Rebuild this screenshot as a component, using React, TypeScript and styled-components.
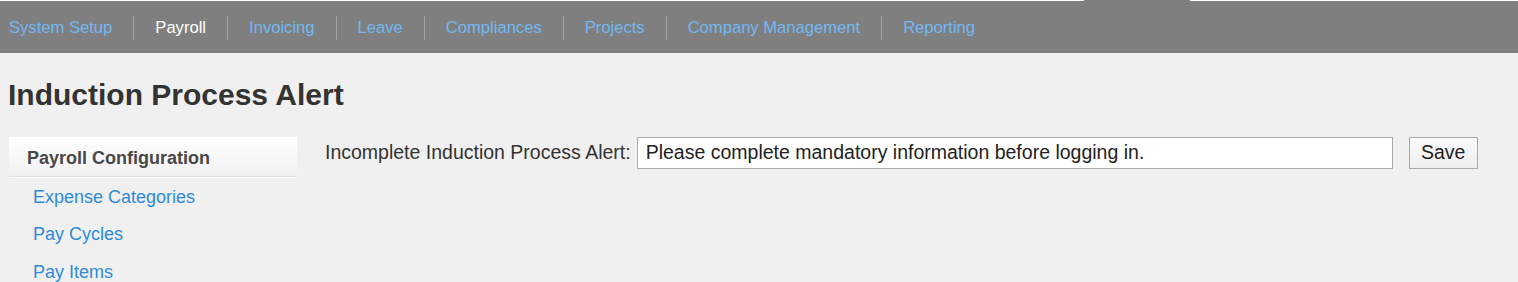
import React from 'react';
import styled, { createGlobalStyle } from 'styled-components';

const GlobalStyle = createGlobalStyle`
  html, body {
    margin: 0;
    padding: 0;
    background: #f0f0f0;
    font-family: "Liberation Sans", Arial, sans-serif;
  }
`;

const TopStrip = styled.div`
  height: 1px;
  background: #ffffff;
  display: flex;
`;

const StripTab = styled.div`
  margin-left: 1084px;
  width: 106px;
  background: #7f7f7f;
`;

const Nav = styled.nav`
  box-sizing: border-box;
  height: 52px;
  padding: 2px 0 0 9px;
  background: #7f7f7f;
  display: flex;
  align-items: center;
`;

const NavLink = styled.a<{ $active?: boolean }>`
  font-size: 16.6px;
  color: ${(p) => (p.$active ? '#ffffff' : '#72b8f4')};
  text-decoration: none;
  cursor: pointer;
  white-space: nowrap;
  &:hover {
    text-decoration: underline;
  }
`;

const Divider = styled.span`
  width: 1px;
  height: 24px;
  margin: 0 21px;
  background: #a3a3a3;
`;

const Page = styled.main`
  padding: 25px 8px 0;
`;

const Title = styled.h1`
  margin: 0 0 24px;
  font-size: 30px;
  font-weight: bold;
  color: #333333;
  line-height: 34.5px;
`;

const Layout = styled.div`
  display: flex;
  align-items: flex-start;
  gap: 28px;
`;

const Sidebar = styled.aside`
  width: 288px;
  margin-left: 1px;
`;

const SideHeading = styled.div`
  padding: 11px 18px 7px;
  line-height: 21px;
  font-size: 18px;
  font-weight: bold;
  color: #484848;
  background: linear-gradient(to bottom, #ffffff, #f1f1f1);
  border-bottom: 1px solid #dedede;
  box-shadow: 0 1px 0 #ffffff;
`;

const SideList = styled.ul`
  list-style: none;
  margin: 2px 0 0;
  padding: 0 0 0 24px;
`;

const SideItem = styled.li`
  line-height: 37.7px;
`;

const SideLink = styled.a`
  font-size: 18px;
  color: #2f8ad8;
  text-decoration: none;
  cursor: pointer;
`;

const FormRow = styled.div`
  display: flex;
  align-items: center;
  font-size: 19.5px;
  color: #333333;
`;

const Label = styled.label`
  margin-right: 6px;
  white-space: nowrap;
`;

const TextInput = styled.input`
  box-sizing: border-box;
  width: 756px;
  height: 32px;
  padding: 0 8px;
  border: 1px solid #a9a9a9;
  background: #ffffff;
  font-family: inherit;
  font-size: 19.5px;
  color: #222222;
  outline: none;
`;

const SaveButton = styled.button`
  box-sizing: border-box;
  margin-left: 16px;
  width: 69px;
  height: 32px;
  padding: 0;
  border: 1px solid #a9a9a9;
  background: linear-gradient(to bottom, #fafafa, #efefef);
  font-family: inherit;
  font-size: 19.5px;
  color: #222222;
  cursor: pointer;
`;

const navItems = [
  'System Setup',
  'Payroll',
  'Invoicing',
  'Leave',
  'Compliances',
  'Projects',
  'Company Management',
  'Reporting',
];

const sideLinks = ['Expense Categories', 'Pay Cycles', 'Pay Items'];

export default function App() {
  return (
    <>
      <GlobalStyle />
      <TopStrip>
        <StripTab />
      </TopStrip>
      <Nav>
        {navItems.map((item, i) => (
          <React.Fragment key={item}>
            {i > 0 && <Divider />}
            <NavLink $active={item === 'Payroll'}>{item}</NavLink>
          </React.Fragment>
        ))}
      </Nav>
      <Page>
        <Title>Induction Process Alert</Title>
        <Layout>
          <Sidebar>
            <SideHeading>Payroll Configuration</SideHeading>
            <SideList>
              {sideLinks.map((link) => (
                <SideItem key={link}>
                  <SideLink>{link}</SideLink>
                </SideItem>
              ))}
            </SideList>
          </Sidebar>
          <FormRow>
            <Label htmlFor="induction-alert">Incomplete Induction Process Alert:</Label>
            <TextInput
              id="induction-alert"
              defaultValue="Please complete mandatory information before logging in."
            />
            <SaveButton>Save</SaveButton>
          </FormRow>
        </Layout>
      </Page>
    </>
  );
}
